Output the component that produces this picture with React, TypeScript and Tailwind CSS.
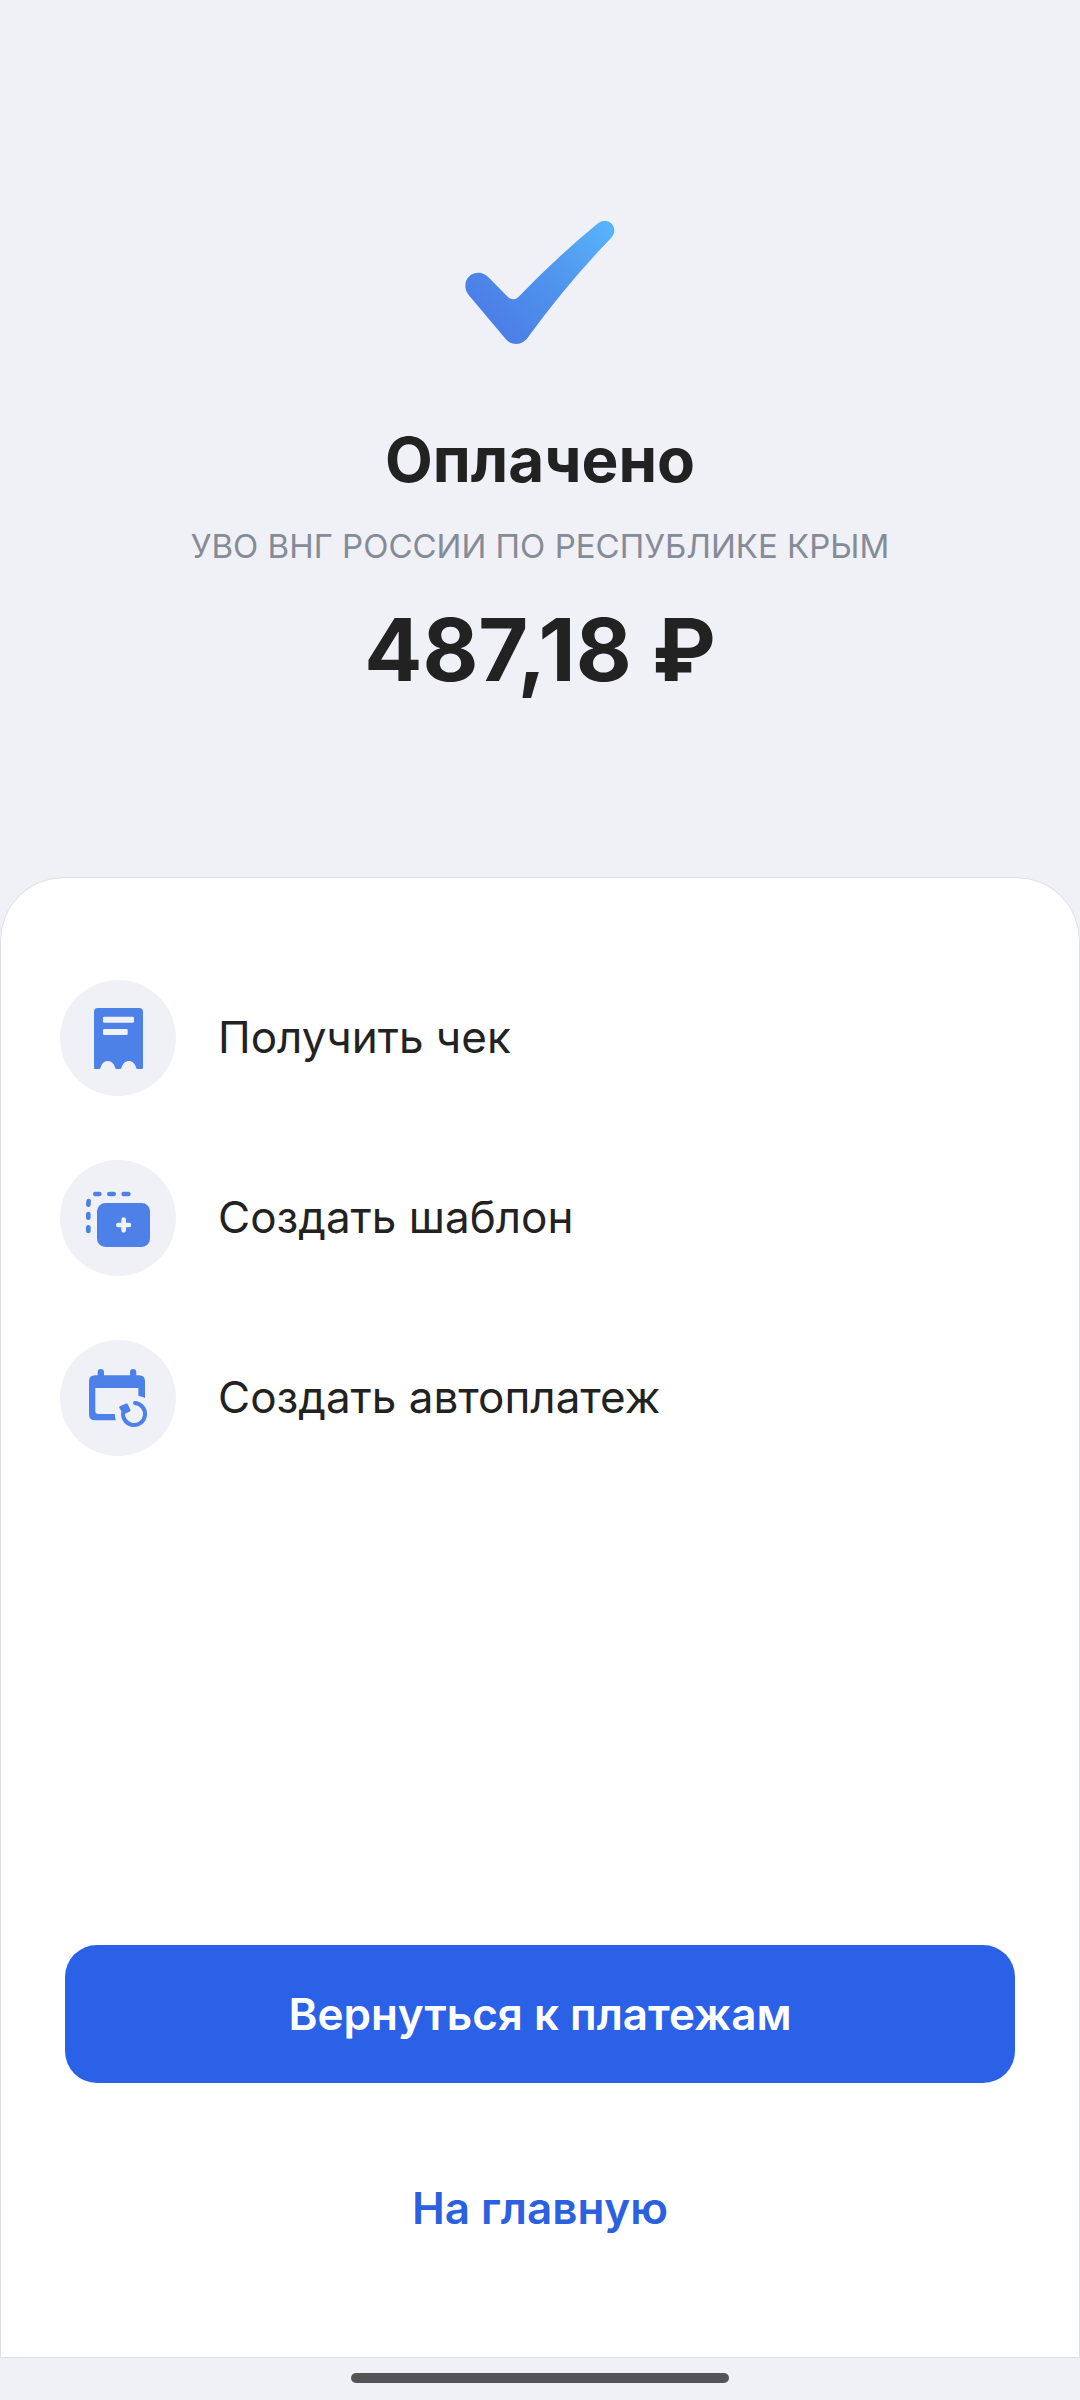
import type { ReactNode } from "react";

function CheckMark() {
  return (
    <svg viewBox="0 0 600 480" className="h-40 w-[200px]" aria-hidden="true">
      <defs>
        <linearGradient id="check-fill" x1="180" y1="370" x2="500" y2="80" gradientUnits="userSpaceOnUse">
          <stop offset="0" stopColor="#4c80e8" />
          <stop offset="0.45" stopColor="#4f93ec" />
          <stop offset="1" stopColor="#58b2fa" />
        </linearGradient>
      </defs>
      <path
        fill="url(#check-fill)"
        d="M76 257C76 234 93 218 115 218C127 218 136 223 144 230L203 290Q219 306 236 290Q354 168 474 70C482 64 488 62 494 62C510 62 523 75 523 91C523 99 520 106 514 113Q380 252 264 412C256 424 244 432 229 432C215 432 205 426 197 417L86 285C79 276 76 267 76 257Z"
      />
    </svg>
  );
}

function ReceiptIcon() {
  return (
    <svg viewBox="0 0 348 348" className="h-full w-full" aria-hidden="true">
      <path
        fill="#4d81e8"
        d="M113 84H238Q249 84 249 95V264Q249 267 246 267H232Q229 267 228 262C225 251 217 243 207 243C196 243 188 251 185 262Q184 267 181 267H169Q166 267 165 262C162 251 154 243 143 243C133 243 125 251 122 262Q121 267 118 267H105Q102 267 102 264V95Q102 84 113 84Z"
      />
      <rect x="129" y="110" width="93" height="18" rx="4" fill="#f0f1f6" />
      <rect x="129" y="147" width="74" height="18" rx="4" fill="#f0f1f6" />
    </svg>
  );
}

function TemplateIcon() {
  return (
    <svg viewBox="0 0 348 348" className="h-full w-full" aria-hidden="true">
      <g stroke="#4d81e8" strokeWidth="14" strokeLinecap="round">
        <path d="M106 102H118M148 102H161M191 102H205" />
        <path d="M86 123L85 134M85 162V173M85 202V213" />
      </g>
      <rect x="111" y="129" width="159" height="132" rx="25" fill="#4d81e8" />
      <path d="M175 195H207M191 179V211" stroke="#f0f1f6" strokeWidth="14" strokeLinecap="round" />
    </svg>
  );
}

function AutopayIcon() {
  return (
    <svg viewBox="0 0 348 348" className="h-full w-full" aria-hidden="true">
      <path
        fill="#4d81e8"
        d="M113 106V97Q113 87 122 87Q132 87 132 97V106H210V97Q210 87 219 87Q229 87 229 97V106H237Q255 106 255 124V174Q246 169 235 167V144H106V213Q106 222 115 222H164L167 241H105Q87 241 87 223V124Q87 106 105 106Z"
      />
      <path d="M223 189A33 33 0 1 1 191 211" fill="none" stroke="#4d81e8" strokeWidth="12" />
      <circle cx="225" cy="189" r="6" fill="#4d81e8" />
      <path
        d="M181 202L200 194L208 211L192 219Z"
        fill="#4d81e8"
        stroke="#4d81e8"
        strokeWidth="7"
        strokeLinejoin="round"
      />
    </svg>
  );
}

type Action = { label: string; icon: ReactNode };

const actions: Action[] = [
  { label: "Получить чек", icon: <ReceiptIcon /> },
  { label: "Создать шаблон", icon: <TemplateIcon /> },
  { label: "Создать автоплатеж", icon: <AutopayIcon /> },
];

export default function App() {
  return (
    <div className="flex min-h-screen flex-col bg-[#f0f1f6] font-['Inter','Liberation_Sans',sans-serif] text-[#222222]">
      <header className="flex flex-col items-center px-8 pt-[200px] pb-[175px] text-center">
        <CheckMark />
        <h1 className="mt-[60px] text-[62px] leading-[80px] font-bold">Оплачено</h1>
        <p className="mt-[22px] text-[33px] leading-[48px] text-[#858b97]">УВО ВНГ РОССИИ ПО РЕСПУБЛИКЕ КРЫМ</p>
        <p className="mt-7 text-[86px] leading-[104px] font-bold">487,18 ₽</p>
      </header>

      <main className="flex flex-1 flex-col rounded-t-[64px] border border-[#dddfe3] bg-white px-16 pt-[102px] pb-[80px]">
        <ul className="-ml-[5px] flex flex-col gap-16">
          {actions.map((action) => (
            <li key={action.label}>
              <button type="button" className="flex w-full items-center gap-[42px] text-left text-[44px] leading-[56px]">
                <span className="size-[116px] shrink-0 rounded-full bg-[#f0f1f6]">{action.icon}</span>
                <span className="pb-[3px]">{action.label}</span>
              </button>
            </li>
          ))}
        </ul>

        <div className="mt-auto flex flex-col gap-14 text-[44px] leading-[56px] font-semibold">
          <button type="button" className="h-[138px] w-full rounded-[32px] bg-[#2b61e7] text-white">
            Вернуться к платежам
          </button>
          <button type="button" className="h-[138px] w-full rounded-[32px] text-[#2b61e0]">
            На главную
          </button>
        </div>
      </main>

      <footer className="flex justify-center pt-[15px] pb-[17px]">
        <span className="h-[10px] w-[35%] rounded-full bg-[#545456]" />
      </footer>
    </div>
  );
}
